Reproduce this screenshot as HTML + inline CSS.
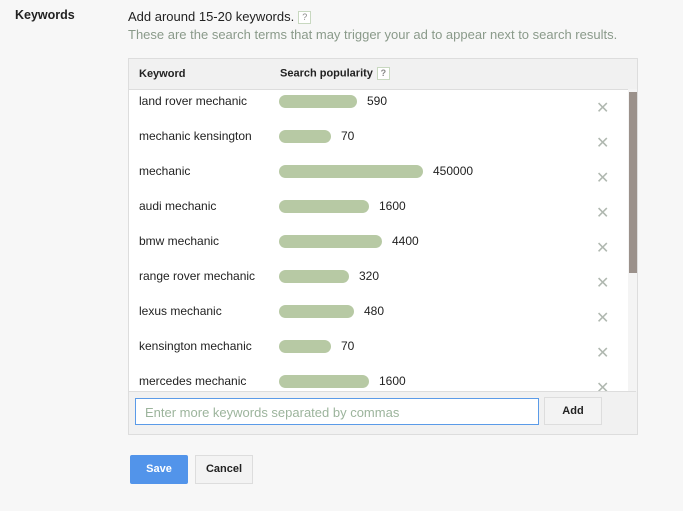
<!DOCTYPE html>
<html><head><style>
body{margin:0;width:683px;height:511px;background:#f7f7f7;font-family:"Liberation Sans",Arial,sans-serif;position:relative;overflow:hidden;font-size:12px;color:#222}
.a{position:absolute}
.q{display:inline-block;width:11px;height:11px;border:1px solid #c8d8c0;font-size:9px;line-height:11px;text-align:center;color:#888;background:#fff;vertical-align:middle;margin-left:4px}
.bar{position:absolute;left:279px;height:13px;border-radius:7px;background:#b7c9a4}
.x{position:absolute;left:596px;color:#b0b8b0;font-size:16px}
</style></head><body>
<div class="a" style="left:15px;top:8px;font-weight:bold;font-size:12.5px">Keywords</div>
<div class="a" style="left:128px;top:9px;font-size:13px">Add around 15-20 keywords.<span class="q">?</span></div>
<div class="a" style="left:128px;top:27px;font-size:13px;color:#8a9a8a">These are the search terms that may trigger your ad to appear next to search results.</div>
<div class="a" style="left:128px;top:58px;width:508px;height:375px;border:1px solid #ddd;background:#f1f1f1"></div>
<div class="a" style="left:129px;top:89px;width:499px;height:302px;background:#fff;border-top:1px solid #ddd"></div>
<div class="a" style="left:628px;top:89px;width:9px;height:302px;background:#f4f4f4"></div>
<div class="a" style="left:629px;top:92px;width:8px;height:181px;background:#9b918b"></div>
<div class="a" style="left:139px;top:68px;font-weight:bold;font-size:11px">Keyword</div>
<div class="a" style="left:280px;top:67px;font-weight:bold;font-size:11px">Search popularity<span class="q">?</span></div>
<div class="a" style="left:129px;top:89px;width:499px;height:302px;overflow:hidden">
<div style="position:relative;top:-89px">
<div class="a" style="left:10px;top:94px">land rover mechanic</div><div class="bar" style="left:150px;top:95px;width:78px"></div><div class="a" style="left:238px;top:94px">590</div><div class="x" style="left:467px;top:98px">✕</div>
<div class="a" style="left:10px;top:129px">mechanic kensington</div><div class="bar" style="left:150px;top:130px;width:52px"></div><div class="a" style="left:212px;top:129px">70</div><div class="x" style="left:467px;top:133px">✕</div>
<div class="a" style="left:10px;top:164px">mechanic</div><div class="bar" style="left:150px;top:165px;width:144px"></div><div class="a" style="left:304px;top:164px">450000</div><div class="x" style="left:467px;top:168px">✕</div>
<div class="a" style="left:10px;top:199px">audi mechanic</div><div class="bar" style="left:150px;top:200px;width:90px"></div><div class="a" style="left:250px;top:199px">1600</div><div class="x" style="left:467px;top:203px">✕</div>
<div class="a" style="left:10px;top:234px">bmw mechanic</div><div class="bar" style="left:150px;top:235px;width:103px"></div><div class="a" style="left:263px;top:234px">4400</div><div class="x" style="left:467px;top:238px">✕</div>
<div class="a" style="left:10px;top:269px">range rover mechanic</div><div class="bar" style="left:150px;top:270px;width:70px"></div><div class="a" style="left:230px;top:269px">320</div><div class="x" style="left:467px;top:273px">✕</div>
<div class="a" style="left:10px;top:304px">lexus mechanic</div><div class="bar" style="left:150px;top:305px;width:75px"></div><div class="a" style="left:235px;top:304px">480</div><div class="x" style="left:467px;top:308px">✕</div>
<div class="a" style="left:10px;top:339px">kensington mechanic</div><div class="bar" style="left:150px;top:340px;width:52px"></div><div class="a" style="left:212px;top:339px">70</div><div class="x" style="left:467px;top:343px">✕</div>
<div class="a" style="left:10px;top:374px">mercedes mechanic</div><div class="bar" style="left:150px;top:375px;width:90px"></div><div class="a" style="left:250px;top:374px">1600</div><div class="x" style="left:467px;top:378px">✕</div>
</div></div>
<div class="a" style="left:129px;top:391px;width:507px;border-top:1px solid #ddd"></div>
<div class="a" style="left:135px;top:398px;width:404px;height:27px;border:1px solid #5b9be8;background:#fff;box-sizing:border-box"></div>
<div class="a" style="left:145px;top:405px;font-size:13px;color:#9cb49c">Enter more keywords separated by commas</div>
<div class="a" style="left:544px;top:397px;width:58px;height:28px;border:1px solid #ddd;background:#f3f3f3;box-sizing:border-box;text-align:center;line-height:26px;font-weight:bold;font-size:11px">Add</div>
<div class="a" style="left:130px;top:455px;width:58px;height:29px;background:#5294ea;border-radius:2px;color:#fff;text-align:center;line-height:29px;font-weight:bold;font-size:11px">Save</div>
<div class="a" style="left:195px;top:455px;width:58px;height:29px;border:1px solid #ddd;background:#f3f3f3;box-sizing:border-box;text-align:center;line-height:27px;font-weight:bold;font-size:11px">Cancel</div>
</body></html>
